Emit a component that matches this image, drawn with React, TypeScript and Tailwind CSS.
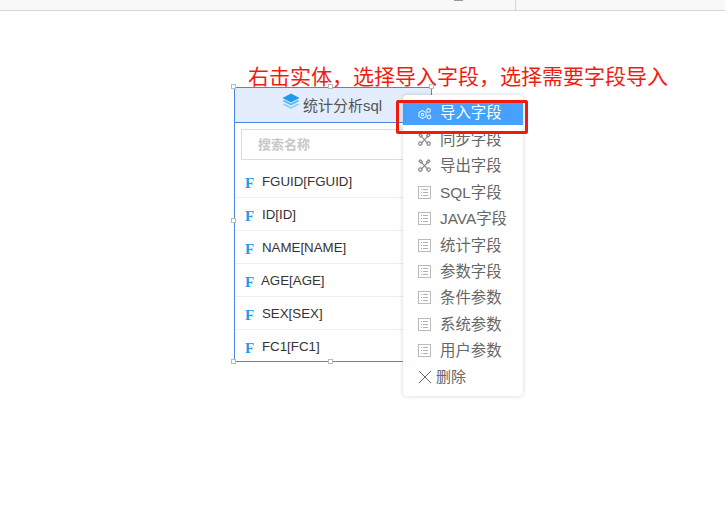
const fields = [
  { label: 'FGUID[FGUID]', shift: '' },
  { label: 'ID[ID]', shift: '' },
  { label: 'NAME[NAME]', shift: '' },
  { label: 'AGE[AGE]', shift: '-ml-px' },
  { label: 'SEX[SEX]', shift: '' },
  { label: 'FC1[FC1]', shift: '' },
]

const listItems = ['SQL字段', 'JAVA字段', '统计字段', '参数字段', '条件参数', '系统参数', '用户参数']

function LayersIcon() {
  return (
    <svg width="18" height="18" viewBox="0 0 18 18" className="-mt-[7px]">
      <path d="M9 0.5L17.5 5 9 9.5 0.5 5z" fill="#1e9be8" />
      <path d="M0.5 8L2.5 7 9 10.5 15.5 7 17.5 8 9 12.5z" fill="#5ab8f0" />
      <path d="M0.5 11.5L2.5 10.5 9 14 15.5 10.5 17.5 11.5 9 16z" fill="#8fd0f6" />
    </svg>
  )
}

function ListIcon() {
  return (
    <svg width="13" height="13" viewBox="0 0 13 13" fill="none" stroke="#bbbbbb" strokeWidth="1">
      <rect x="0.5" y="0.5" width="12" height="12" />
      <path d="M3 3.5h1M5 3.5h5M3 6.5h1M5 6.5h5M3 9.5h1M5 9.5h5" stroke="#b0b0b0" />
    </svg>
  )
}

function ToolIcon() {
  return (
    <svg width="13" height="13" viewBox="0 0 13 13" fill="none" stroke="#8a8a8a" strokeWidth="1.2">
      <path d="M3.2 3.2l6.6 7.2M9.8 3.2l-6.6 7.2" />
      <path d="M1 2.2l1.4-1.4 2 2-1.4 1.4zM12 2.2l-1.4-1.4-2 2 1.4 1.4z" />
      <circle cx="2.4" cy="10.6" r="1.7" />
      <circle cx="10.6" cy="10.6" r="1.7" />
    </svg>
  )
}

function ImportIcon() {
  return (
    <svg width="14" height="12" viewBox="0 0 14 12" fill="none" stroke="#dcecff" strokeWidth="1.2">
      <path d="M4.5 2.5l3.5 2v4l-3.5 2-3.5-2v-4z" />
      <circle cx="4.5" cy="6.5" r="1.2" />
      <circle cx="10.5" cy="2.5" r="1.8" />
      <circle cx="11" cy="9" r="1.8" />
    </svg>
  )
}

function Handle({ className }: { className: string }) {
  return <div className={`absolute w-[5px] h-[5px] bg-white border border-[#bbbbbb] ${className}`} />
}

export default function App() {
  return (
    <div className="relative w-[725px] h-[527px] bg-white overflow-hidden font-['Liberation_Sans','Noto_Sans_CJK_SC',sans-serif]">
      <div className="h-[11px] bg-[#f8f8f8] border-b border-[#ccd5e0] flex">
        <div className="w-[516px] border-r border-[#d5d5d5] relative">
          <div className="absolute left-[454px] top-0 w-[9px] h-px bg-[#999999]" />
        </div>
      </div>

      <div className="absolute left-[248px] top-[64px] text-[21px] leading-[26px] text-[#f01c10] whitespace-nowrap">
        右击实体{'\uFF0C'}选择导入字段{'\uFF0C'}选择需要字段导入
      </div>

      {/* entity node */}
      <div className="absolute left-[234px] top-[87px] w-[198px] h-[275px] border border-[#4a86e8] bg-white">
        <div className="h-[35px] bg-[#e3edfc] border-b border-[#4a86e8] flex items-center justify-center gap-[3px] pr-[2px]">
          <LayersIcon />
          <span className="text-[15px] leading-[20px] mt-[2px] text-[#555555]">统计分析sql</span>
        </div>
        <div className="px-[6px] pt-[6px]">
          <div className="h-[31px] border border-[#dddddd] flex items-center pl-[16px] text-[13px] font-bold text-[#c8c8c8]">
            搜索名称
          </div>
        </div>
        <div className="mt-[5px]">
          {fields.map((field, i) => (
            <div
              key={field.label}
              className={`h-[33px] flex items-center pl-[10px] ${i < fields.length - 1 ? 'border-b border-[#eeeeee]' : ''}`}
            >
              <span className="w-[17px] mt-[4px] text-[15px] font-bold text-[#1e9bf0] font-['Liberation_Serif',serif]">F</span>
              <span className={`text-[13.3px] leading-[18px] mt-[1px] text-[#333333] ${field.shift}`}>{field.label}</span>
            </div>
          ))}
        </div>
        <Handle className="-left-[4px] -top-[4px]" />
        <Handle className="left-[93px] -top-[4px]" />
        <Handle className="-right-[3px] -top-[4px]" />
        <Handle className="-left-[4px] top-[130px]" />
        <Handle className="-left-[4px] -bottom-[3px]" />
        <Handle className="left-[93px] -bottom-[3px]" />
      </div>

      {/* context menu */}
      <div className="absolute left-[403px] top-[95px] w-[120px] h-[301px] bg-white rounded-[4px] shadow-[0_0_4px_rgba(0,0,0,0.18)] pt-[7px] text-[15.4px] text-[#666666]">
        <div className="h-[23px] bg-[#46a0fc] flex items-center pl-[15px] gap-[8px] text-white mb-[1.4px]">
          <ImportIcon />
          <span className="-mt-[2px]">导入字段</span>
        </div>
        <div className="h-[26.4px] flex items-center pl-[15px] gap-[9px]">
          <ToolIcon />
          <span>同步字段</span>
        </div>
        <div className="h-[26.4px] flex items-center pl-[15px] gap-[9px]">
          <ToolIcon />
          <span>导出字段</span>
        </div>
        {listItems.map((item) => (
          <div key={item} className="h-[26.4px] flex items-center pl-[15px] gap-[9px]">
            <ListIcon />
            <span>{item}</span>
          </div>
        ))}
        <div className="h-[26.4px] flex items-center pl-[15px] gap-[4px]">
          <svg width="14" height="14" viewBox="0 0 14 14" fill="none" stroke="#666" strokeWidth="1">
            <path d="M1 1l12 12M13 1L1 13" />
          </svg>
          <span className="text-[15px]">删除</span>
        </div>
      </div>

      {/* red highlight around the first item */}
      <div className="absolute left-[396px] top-[100px] w-[132px] h-[34px] border-[3px] border-[#ee1c10] rounded-[2px]" />
    </div>
  )
}
